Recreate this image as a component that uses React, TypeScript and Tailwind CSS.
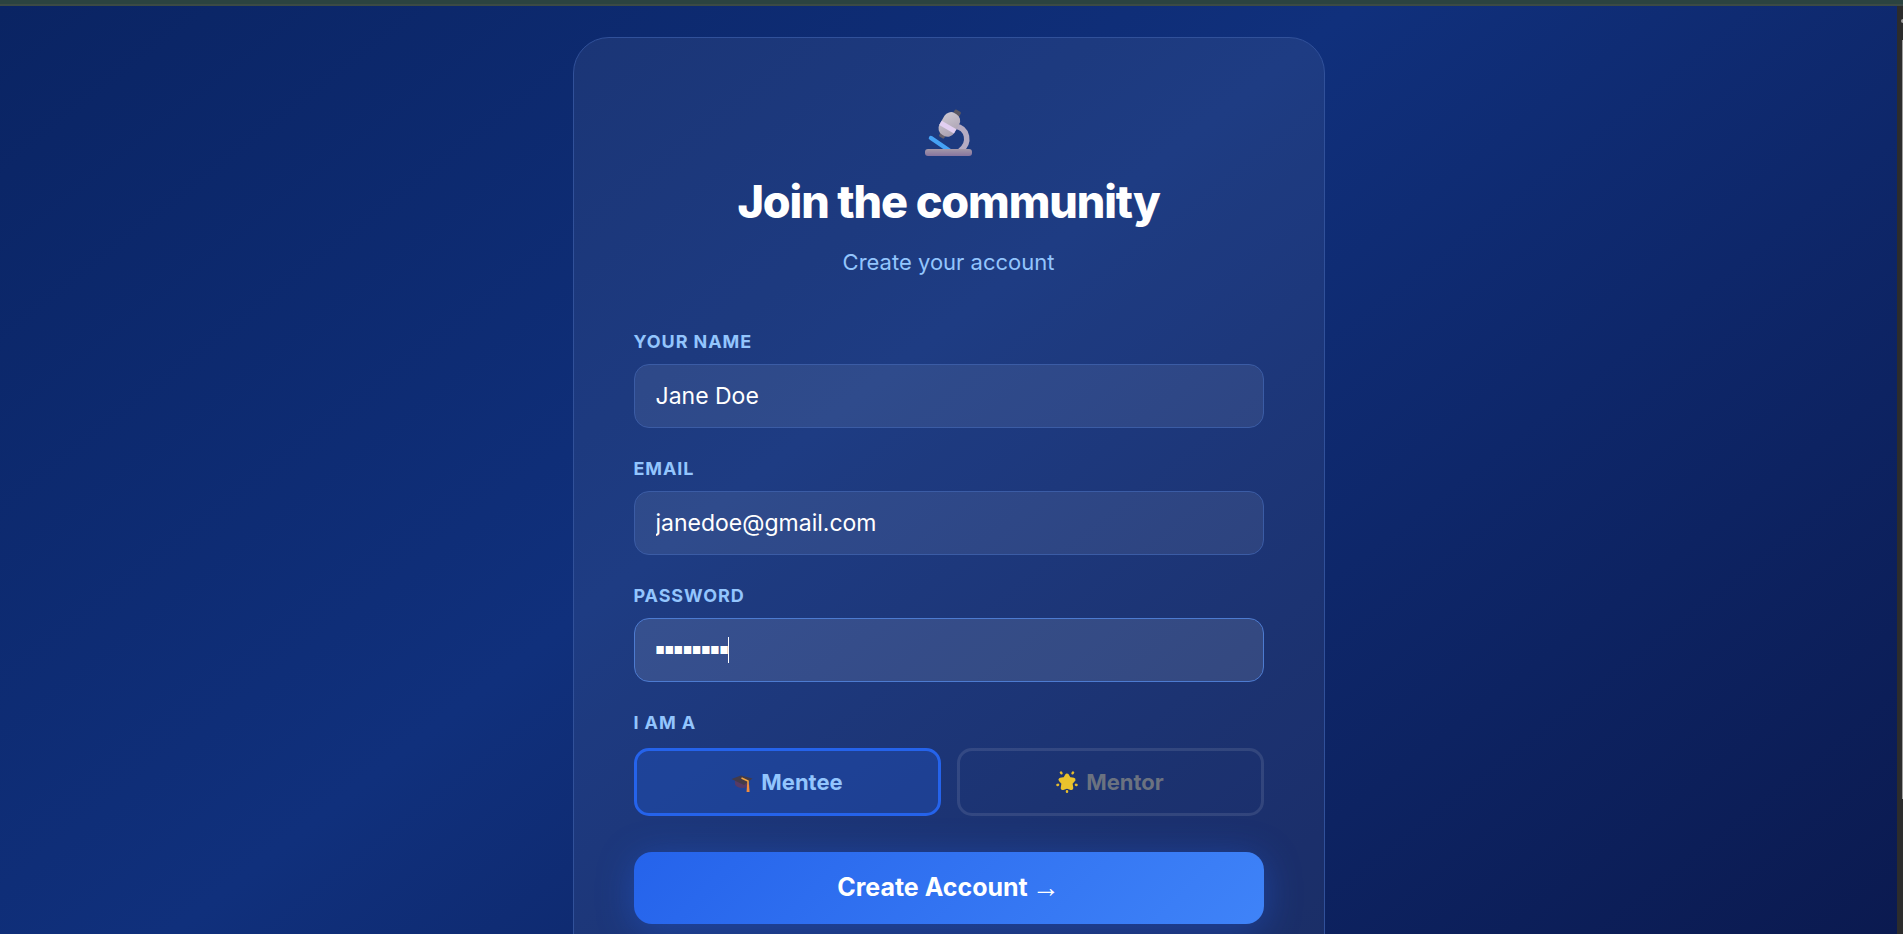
import React, { useState } from "react";

const labelClass = "block text-[18px] leading-5 font-bold uppercase tracking-wider text-[#93c5fd]";
const inputClass = "block h-16 w-full rounded-[15px] border px-[21px] text-white outline-none";

const MicroscopeIcon = () => (
  <svg viewBox="0 0 48 48" className="h-12 w-12 overflow-visible" aria-hidden="true">
    <defs>
      <linearGradient id="scopeBody" x1="0" y1="0" x2="1" y2="1">
        <stop offset="0" stopColor="#cfcad3" />
        <stop offset="1" stopColor="#a79dae" />
      </linearGradient>
      <linearGradient id="scopeBase" x1="0" y1="0" x2="0" y2="1">
        <stop offset="0" stopColor="#a498a8" />
        <stop offset="1" stopColor="#86749f" />
      </linearGradient>
    </defs>
    <path d="M30 16C43 18 46 33 35 41" fill="none" stroke="#b5abc2" strokeWidth="5.5" />
    <path d="M6 28L25 41" stroke="#45a2f5" strokeWidth="4.5" strokeLinecap="round" />
    <g transform="rotate(30 24 16)">
      <rect x="21" y="-2" width="7" height="7" rx="1.5" fill="#5b5862" />
      <rect x="20" y="25" width="6" height="5" rx="1.5" fill="#66606d" />
      <rect x="15" y="2" width="17" height="25" rx="7.5" fill="url(#scopeBody)" />
      <path d="M15 15h17v5H15z" fill="#e2cff2" />
    </g>
    <rect x="0" y="39" width="47" height="7" rx="3" fill="url(#scopeBase)" />
  </svg>
);

const GraduationIcon = () => (
  <svg viewBox="0 0 22 22" className="h-[22px] w-[22px]" aria-hidden="true">
    <path d="M4 9v4.500c2 4 9 5 14 1V8z" fill="#563a66" />
    <path d="M0.500 8L10 4.500 21.500 7.500 13 14z" fill="#433b49" />
    <path d="M10.500 7l6.500 3v5" fill="none" stroke="#f3a640" strokeWidth="1.5" />
    <path d="M16 13.500h2l.6 7.500h-3z" fill="#f28b3c" />
  </svg>
);

const StarIcon = () => (
  <svg viewBox="0 0 22 22" className="h-[22px] w-[22px]" aria-hidden="true">
    <path
      d="M11 4.500l2 3.500 4.500.8-3 3.400.8 4.800-4.300-1.500-4.300 1.500.8-4.800-3-3.400L9 8z"
      fill="#eac32d"
      stroke="#eac32d"
      strokeWidth="4"
      strokeLinejoin="round"
    />
    <path
      d="M5 1.500l.4.800M17 1.500l-.4.800M1.500 14l.5-.2M20.500 14l-.5-.2M11 20.300v.4"
      stroke="#e7bd2c"
      strokeWidth="2.5"
      strokeLinecap="round"
    />
  </svg>
);

const App: React.FC = () => {
  const [name, setName] = useState("Jane Doe");
  const [email, setEmail] = useState("janedoe@gmail.com");
  const [password, setPassword] = useState("password");
  const [role, setRole] = useState("mentee");

  const roles = [
    { id: "mentee", label: "Mentee", icon: <GraduationIcon /> },
    { id: "mentor", label: "Mentor", icon: <StarIcon /> },
  ];

  return (
    <div className="flex h-screen flex-col overflow-hidden font-['Inter','Liberation_Sans',sans-serif]">
      {/* Window edge */}
      <div className="h-[6px] shrink-0 border-b-2 border-[#3b4a45] bg-[#2b4340]" />

      <div className="flex min-h-0 flex-1">
        <main className="flex-1 overflow-y-auto bg-[linear-gradient(142deg,#0a2463_0%,#10307c_44%,#0b1a50_100%)] px-6 py-[31px] [scrollbar-width:none]">
          <div className="mx-auto w-full max-w-[752px] rounded-[36px] border border-[#31519a] bg-white/[0.06] px-[60px] pt-[72px] pb-[60px]">
            {/* Header */}
            <div className="flex flex-col items-center text-center">
              <MicroscopeIcon />
              <h1 className="mt-[18px] text-[45px] leading-[52px] font-extrabold tracking-tight text-white">
                Join the community
              </h1>
              <p className="mt-5 text-[22px] leading-7 text-[#93c5fd]">Create your account</p>
            </div>

            <form className="mt-14" onSubmit={(e) => e.preventDefault()}>
              {/* Text fields */}
              <div className="flex flex-col gap-[31px]">
                <div className="flex flex-col gap-3">
                  <label htmlFor="name" className={labelClass}>Your name</label>
                  <input
                    id="name"
                    type="text"
                    value={name}
                    onChange={(e) => setName(e.target.value)}
                    className={`${inputClass} border-[#3b5ca5] bg-white/[0.08] text-[23px]`}
                  />
                </div>
                <div className="flex flex-col gap-3">
                  <label htmlFor="email" className={labelClass}>Email</label>
                  <input
                    id="email"
                    type="email"
                    value={email}
                    onChange={(e) => setEmail(e.target.value)}
                    className={`${inputClass} border-[#3b5ca5] bg-white/[0.08] text-[23px]`}
                  />
                </div>
                <div className="flex flex-col gap-3">
                  <label htmlFor="password" className={labelClass}>Password</label>
                  <div className="relative">
                    <input
                      id="password"
                      type="text"
                      autoComplete="off"
                      value={password}
                      onChange={(e) => setPassword(e.target.value)}
                      className={`${inputClass} border-[#4d7bd0] bg-white/[0.11] text-[10px] caret-transparent [-webkit-text-security:square]`}
                    />
                    {/* Caret */}
                    <span className="pointer-events-none absolute top-[19px] left-[94px] h-[26px] w-px bg-white" />
                  </div>
                </div>
              </div>

              {/* Role picker */}
              <fieldset className="mt-[31px]">
                <legend className={labelClass}>I am a</legend>
                <div className="mt-[15px] grid grid-cols-2 gap-4">
                  {roles.map((item) => (
                    <button
                      key={item.id}
                      type="button"
                      aria-pressed={role === item.id}
                      onClick={() => setRole(item.id)}
                      className={`flex h-[68px] items-center justify-center gap-2 rounded-[15px] border-[3px] text-[22px] font-bold ${
                        role === item.id
                          ? "border-[#2563eb] bg-[#2563eb]/25 text-[#93c5fd]"
                          : "border-white/10 text-[#6b7280]"
                      }`}
                    >
                      {item.icon}
                      {item.label}
                    </button>
                  ))}
                </div>
              </fieldset>

              <button
                type="submit"
                className="mt-9 flex h-[72px] w-full items-center justify-center gap-1 rounded-[18px] bg-[linear-gradient(135deg,#2563eb,#3f83f8)] text-[25px] font-bold text-white shadow-[0_6px_36px_rgba(37,99,235,0.4)]"
              >
                Create Account
                <span className="font-['Liberation_Sans',sans-serif] text-[28px] font-normal">→</span>
              </button>
            </form>
          </div>
        </main>

        {/* Scroll track */}
        <div className="flex w-[6px] shrink-0 flex-col items-end bg-[#2c2c2c] pt-[13px]">
          <div className="h-[4px] w-[2px] rounded-l-full bg-[#9f9f9f]" />
          <div className="mt-[17px] h-[83%] w-px bg-[#9f9f9f]" />
        </div>
      </div>
    </div>
  );
};

export default App;
